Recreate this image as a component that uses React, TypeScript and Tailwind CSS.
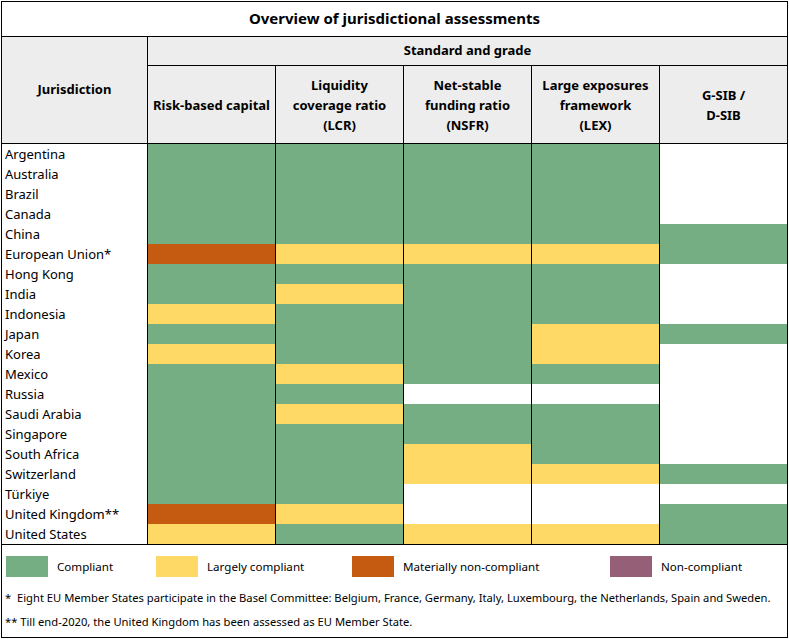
const G = "bg-[#76ae83]";
const Y = "bg-[#ffd966]";
const O = "bg-[#c55a11]";
const W = "bg-white";

type Row = { name: string; cells: string[] };

// columns: RBC, LCR, NSFR, LEX, G-SIB/D-SIB
const rows: Row[] = [
  { name: "Argentina", cells: [G, G, G, G, W] },
  { name: "Australia", cells: [G, G, G, G, W] },
  { name: "Brazil", cells: [G, G, G, G, W] },
  { name: "Canada", cells: [G, G, G, G, W] },
  { name: "China", cells: [G, G, G, G, G] },
  { name: "European Union*", cells: [O, Y, Y, Y, G] },
  { name: "Hong Kong", cells: [G, G, G, G, W] },
  { name: "India", cells: [G, Y, G, G, W] },
  { name: "Indonesia", cells: [Y, G, G, G, W] },
  { name: "Japan", cells: [G, G, G, Y, G] },
  { name: "Korea", cells: [Y, G, G, Y, W] },
  { name: "Mexico", cells: [G, Y, G, G, W] },
  { name: "Russia", cells: [G, G, W, W, W] },
  { name: "Saudi Arabia", cells: [G, Y, G, G, W] },
  { name: "Singapore", cells: [G, G, G, G, W] },
  { name: "South Africa", cells: [G, G, Y, G, W] },
  { name: "Switzerland", cells: [G, G, Y, Y, G] },
  { name: "Türkiye", cells: [G, G, W, W, W] },
  { name: "United Kingdom**", cells: [O, Y, W, W, G] },
  { name: "United States", cells: [Y, G, Y, Y, G] },
];

const subHeads = [
  ["Risk-based capital"],
  ["Liquidity", "coverage ratio", "(LCR)"],
  ["Net-stable", "funding ratio", "(NSFR)"],
  ["Large exposures", "framework", "(LEX)"],
  ["G-SIB /", "D-SIB"],
];

const legend = [
  { color: G, label: "Compliant", w: "w-[150px]" },
  { color: Y, label: "Largely compliant", w: "w-[196px]" },
  { color: O, label: "Materially non-compliant", w: "w-[258px]" },
  { color: "bg-[#955f77]", label: "Non-compliant", w: "w-[160px]" },
];

export default function App() {
  return (
    <div
      className="ml-px mt-px w-[787px] h-[637px] border border-black bg-white text-black text-[13px] flex flex-col overflow-hidden"
      style={{ fontFamily: "'Noto Sans', sans-serif" }}
    >
      <div className="h-[35px] shrink-0 border-b border-black flex items-center justify-center font-bold text-[15px] pb-px">
        Overview of jurisdictional assessments
      </div>

      <div className="flex shrink-0 h-[107px] border-b border-black bg-[#ededed] font-bold">
        <div className="w-[146px] border-r border-black flex items-center justify-center">
          Jurisdiction
        </div>
        <div className="flex-1 flex flex-col">
          <div className="h-[29px] shrink-0 border-b border-black flex items-center justify-center">
            Standard and grade
          </div>
          <div className="flex-1 flex">
            {subHeads.map((lines, i) => (
              <div
                key={i}
                className={
                  "flex flex-col items-center justify-center leading-5 text-center " +
                  (i < 4 ? "w-[128px] border-r border-black" : "flex-1")
                }
              >
                {lines.map((l) => (
                  <span key={l}>{l}</span>
                ))}
              </div>
            ))}
          </div>
        </div>
      </div>

      <div className="flex flex-col shrink-0 border-b border-black">
        {rows.map((r) => (
          <div key={r.name} className="flex h-5 shrink-0">
            <div className="w-[146px] border-r border-black pl-[3px] leading-5 whitespace-nowrap">
              {r.name}
            </div>
            {r.cells.map((c, i) => (
              <div
                key={i}
                className={
                  c + " " + (i < 4 ? "w-[128px] border-r border-black" : "flex-1")
                }
              />
            ))}
          </div>
        ))}
      </div>

      <div className="flex shrink-0 items-center pl-[4px] pt-[11px] text-[11.6px]">
        {legend.map((l) => (
          <div key={l.label} className={"flex items-center shrink-0 " + l.w}>
            <div className={"w-[42px] h-[21px] " + l.color} />
            <span className="ml-[9px]">{l.label}</span>
          </div>
        ))}
      </div>
      <div className="shrink-0 pl-[3px] pt-[9px] text-[11.2px] leading-6 whitespace-nowrap">
        <div>
          * &nbsp;Eight EU Member States participate in the Basel Committee: Belgium, France,
          Germany, Italy, Luxembourg, the Netherlands, Spain and Sweden.
        </div>
        <div>** Till end-2020, the United Kingdom has been assessed as EU Member State.</div>
      </div>
    </div>
  );
}
